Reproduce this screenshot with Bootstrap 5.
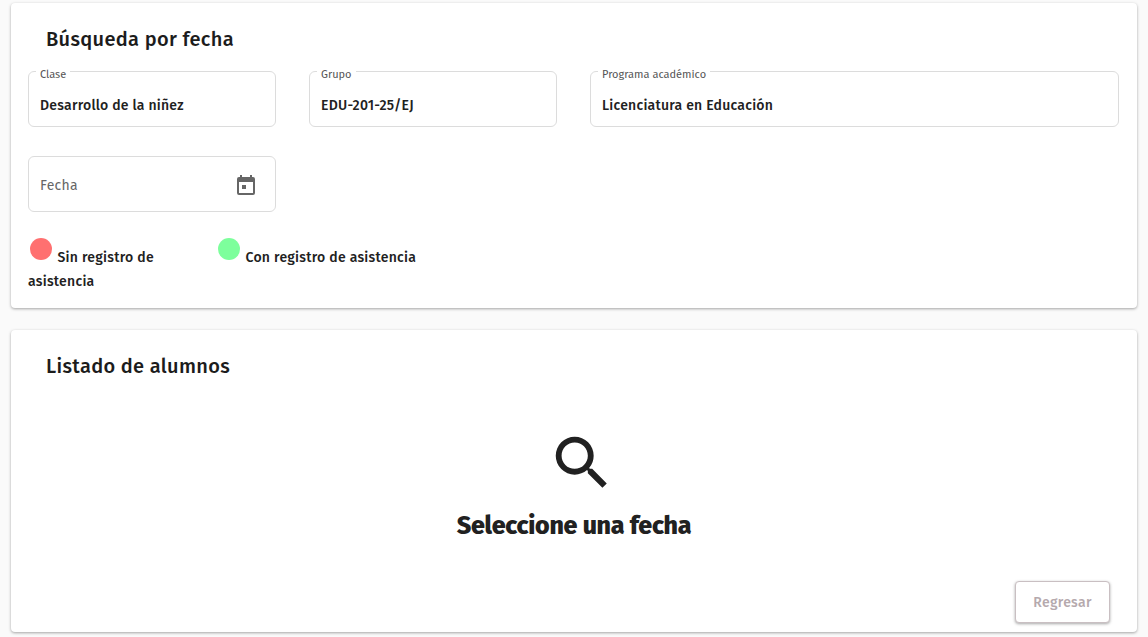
<!DOCTYPE html>
<html lang="es"><head><meta charset="utf-8">
<link href="https://cdn.jsdelivr.net/npm/bootstrap@5.3.0/dist/css/bootstrap.min.css" rel="stylesheet">
<style>
html,body{height:637px;overflow:hidden}
body{background:#fafafa;font-family:"Fira Sans","Open Sans","Noto Sans",sans-serif;color:#212121;padding:3px 11px 0}
.panel{background:#fff;border-radius:4px;box-shadow:0 1px 3px rgba(0,0,0,.35)}
.panel-a{height:305px;padding:0 17px;margin-bottom:22px}
.panel-b{height:302px;padding:0 17px;position:relative}
.ttl{font-size:20px;font-weight:500;letter-spacing:.33px;margin:0;padding:24px 0 0 18px;line-height:24px;color:#1c1c1c}
.fieldbox{border:1px solid #dcdcdc;border-radius:6px;height:56px;padding:12px 11px 0;display:flex;align-items:center;position:relative;font-size:14px;font-weight:500;letter-spacing:.24px}
.fieldbox label{position:absolute;top:-4px;left:7px;background:#fff;padding:0 4px;font-size:11px;line-height:13px;font-weight:400;letter-spacing:0;color:#555}
.w1{width:248px}.w2{width:529px}
.rowa{display:flex;gap:33px;margin-top:20px}
.datebox{padding:2px 17px 0 11px}
.muted{color:#666;font-weight:400;letter-spacing:.3px}
.dot{display:inline-block;width:22px;height:22px;border-radius:50%;margin:0 5.5px 0 2px;vertical-align:2px}
.leg{font-size:14px;font-weight:500;letter-spacing:.26px;line-height:24px;margin-top:26px}
.leg1{width:188px;padding-right:58px}
.empty{text-align:center;margin-top:50px;padding-left:16px}
.empty h2{font-size:25px;font-weight:800;letter-spacing:-.25px;margin:13px 16px 0 0;line-height:30px}
.btnreg{position:absolute;right:27px;bottom:9px;width:95px;height:42px;border:1px solid #c9bfc2;border-radius:4px;background:#fff;color:#b5a9ad;font-weight:500;font-size:14px;letter-spacing:.3px;box-shadow:0 1px 3px rgba(0,0,0,.35)}
</style></head><body>
<div class="panel panel-a">
<h5 class="ttl">Búsqueda por fecha</h5>
<div class="rowa"><div class="fieldbox w1"><label>Clase</label>Desarrollo de la niñez</div><div class="fieldbox w1"><label>Grupo</label>EDU-201-25/EJ</div><div class="fieldbox w2"><label>Programa académico</label>Licenciatura en Educación</div></div>
<div class="rowa" style="margin-top:29px"><div class="fieldbox datebox w1 justify-content-between"><span class="muted">Fecha</span>
<svg width="24" height="24" viewBox="0 0 24 24" fill="#666"><path d="M19 4h-1V2h-2v2H8V2H6v2H5a2 2 0 0 0-2 2v14a2 2 0 0 0 2 2h14a2 2 0 0 0 2-2V6a2 2 0 0 0-2-2zm0 16H5V9h14v11zM8 12h4v4H8z"/></svg></div></div>
<div class="d-flex leg"><div class="leg1"><span class="dot" style="background:#ff7070"></span>Sin registro de asistencia</div><div><span class="dot" style="background:#7dff9c"></span>Con registro de asistencia</div></div>
</div>
<div class="panel panel-b">
<h5 class="ttl">Listado de alumnos</h5>
<div class="empty"><svg width="70" height="70" viewBox="0 0 24 24" fill="#212121"><path d="M15.5 14h-.79l-.28-.27A6.47 6.47 0 0 0 16 9.5 6.5 6.5 0 1 0 9.5 16c1.61 0 3.09-.59 4.23-1.57l.27.28v.79l5 4.99L20.49 19l-4.99-5zm-6 0C7.01 14 5 11.99 5 9.5S7.01 5 9.5 5 14 7.01 14 9.5 11.99 14 9.5 14z"/></svg><h2>Seleccione una fecha</h2></div>
<button class="btnreg">Regresar</button>
</div>
<script src="https://cdn.jsdelivr.net/npm/bootstrap@5.3.0/dist/js/bootstrap.bundle.min.js"></script>
</body></html>
